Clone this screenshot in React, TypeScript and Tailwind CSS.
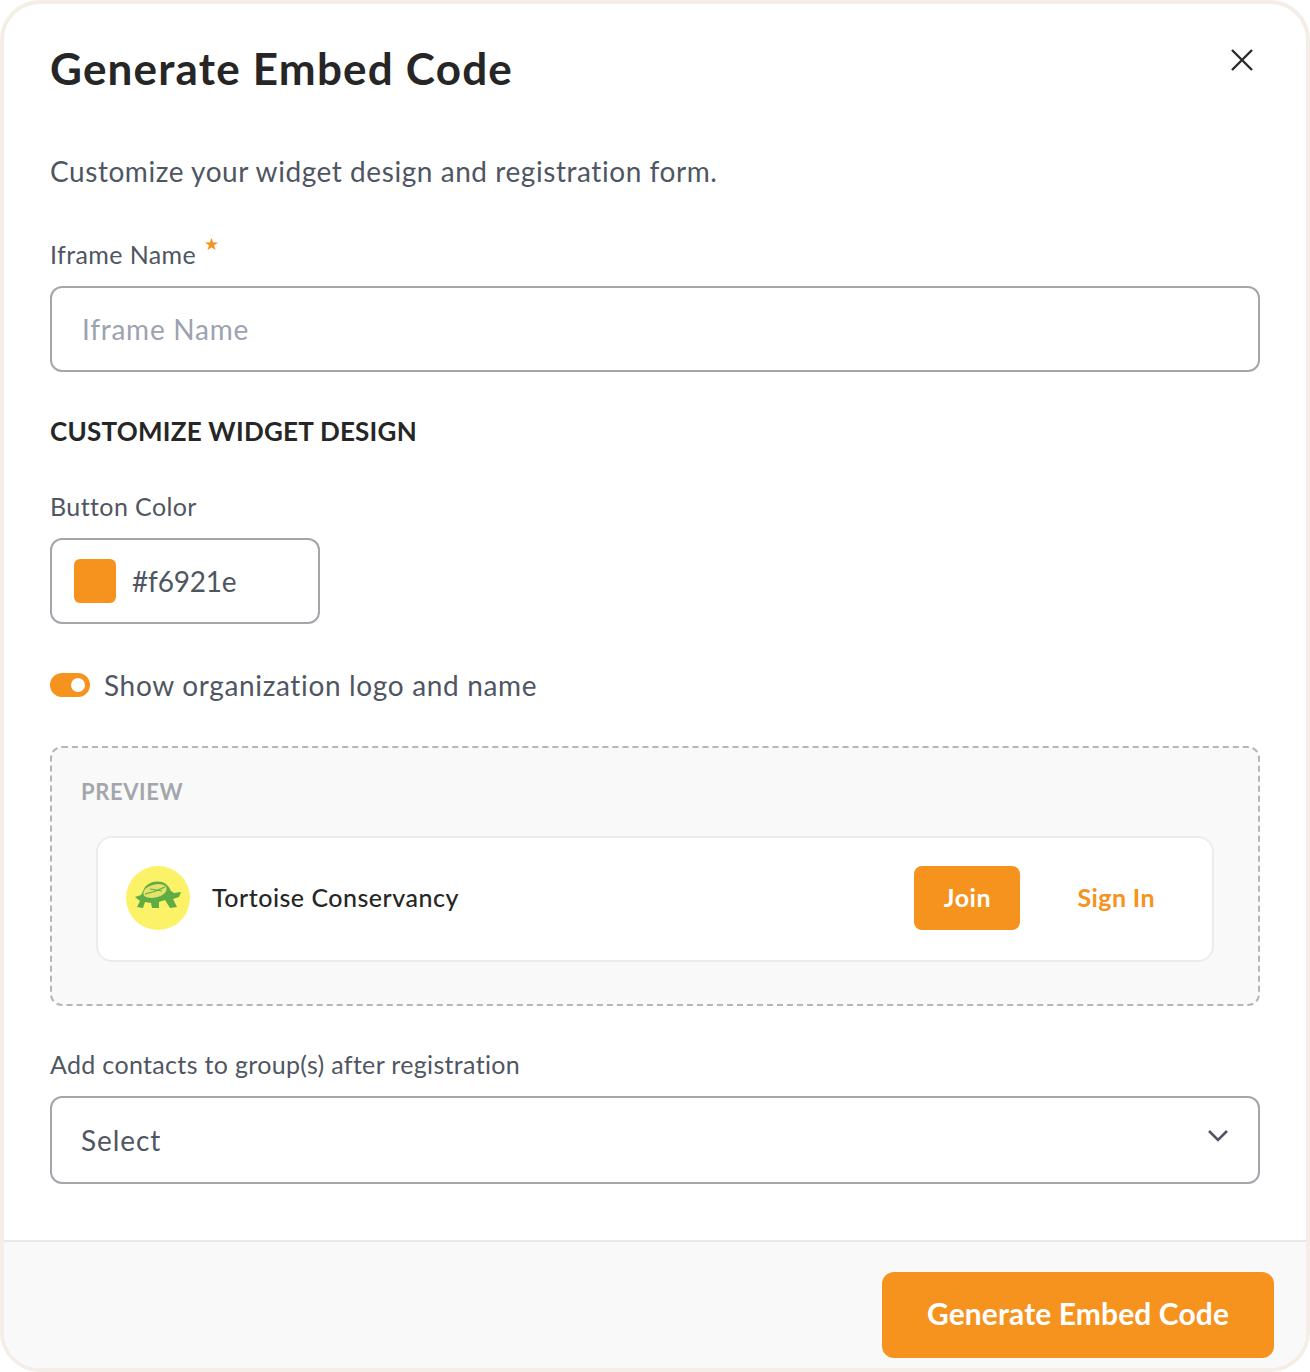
const FONT = "font-['Lato','Noto_Sans',sans-serif]";

const TurtleLogo = () => (
    <svg viewBox="0 0 64 64" className="w-16 h-16 rounded-full bg-[#fcf268]">
        <path d="M9 31 L15 29 L19 21 Q26 14 36 16 Q42 18 45 25 L48 27 L55 26 L53 31 L47 33 L51 41 L44 42 L39 34 L33 36 L33 42 L26 42 L25 37 L19 36 L17 42 L11 41 L14 35 Z" fill="#5fab44" />
        <ellipse cx="29" cy="25" rx="12" ry="6.5" transform="rotate(-14 29 25)" fill="#e3e36c" />
        <path d="M19 28 Q29 26 39 21 M24 23 L36 25" stroke="#5fab44" strokeWidth="1.2" fill="none" />
    </svg>
);

export default function App() {
    return (
        <div className={`w-[1310px] h-[1372px] bg-white border-4 border-[#f5eee7] rounded-[40px] overflow-hidden flex flex-col ${FONT}`}>
            <div className="grow pl-[46px] pr-[46px] pt-[35px] relative">
                <button type="button" className="absolute top-[42px] right-[50px] text-[#2b2b2b]" aria-label="Close">
                    <svg width="28" height="28" viewBox="0 0 28 28" fill="none" stroke="currentColor" strokeWidth="2.4">
                        <path d="M4 4 L24 24 M24 4 L4 24" />
                    </svg>
                </button>
                <h2 className="text-[44px] leading-[58px] font-bold tracking-[1.2px] text-[#262626]">Generate Embed Code</h2>
                <p className="mt-[54px] text-[28px] leading-[40px] tracking-[0.56px] text-[#4f5662]">Customize your widget design and registration form.</p>

                <label className="mt-[45px] flex text-[25px] leading-[36px] tracking-[0.4px] text-[#4f5662]">
                    Iframe Name <span className="text-[#f6921e] text-[17px] leading-[20px] ml-[8px] -mt-[2px]">★</span>
                </label>
                <div className="mt-[14px] h-[86px] border-2 border-[#a3a6ab] rounded-[12px] flex items-center px-[30px] text-[28px] tracking-[0.75px] text-[#9ca3af]">
                    Iframe Name
                </div>

                <h3 className="mt-[41px] text-[26px] leading-[36px] font-bold tracking-[0.25px] text-[#262626]">CUSTOMIZE WIDGET DESIGN</h3>

                <label className="block mt-[39px] text-[25px] leading-[36px] tracking-[0.4px] text-[#4f5662]">Button Color</label>
                <div className="mt-[14px] w-[270px] h-[86px] border-2 border-[#a3a6ab] rounded-[12px] flex items-center gap-4 pl-[22px] text-[28px] tracking-[-0.2px] text-[#4f5662]">
                    <span className="w-[42px] h-[44px] rounded-[6px] bg-[#f6921e]" />
                    #f6921e
                </div>

                <div className="mt-[39px] flex items-center gap-[14px] text-[28px] leading-[44px] tracking-[0.66px] text-[#4f5662]">
                    <span className="w-[40px] h-[24px] rounded-full bg-[#f6921e] flex items-center justify-end pr-[5px]">
                        <span className="w-[14px] h-[14px] rounded-full bg-white" />
                    </span>
                    Show organization logo and name
                </div>

                <div className="mt-[39px] h-[260px] border-2 border-dashed border-[#b4b6ba] rounded-[12px] bg-[#f9f9f9] px-[44px] pt-[29px]">
                    <div className="-ml-[15px] text-[22px] leading-[30px] font-bold tracking-[0.6px] text-[#a3a6ab]">PREVIEW</div>
                    <div className="mt-[29px] h-[126px] pb-[2px] bg-white border-2 border-[#ececec] rounded-[16px] flex items-center pl-[28px]">
                        <TurtleLogo />
                        <span className="ml-[22px] text-[25px] font-medium tracking-[0.5px] text-[#262626] -mt-[1px]">Tortoise Conservancy</span>
                        <span className="ml-auto w-[106px] h-[64px] rounded-[8px] bg-[#f6921e] text-white text-[25px] font-bold tracking-[0.6px] flex items-center justify-center">Join</span>
                        <span className="ml-[57px] mr-[57px] text-[25px] font-bold tracking-[0.4px] text-[#f6921e] -mt-[1px]">Sign In</span>
                    </div>
                </div>

                <label className="block mt-[40px] text-[25px] leading-[36px] tracking-[0.33px] text-[#4f5662]">Add contacts to group(s) after registration</label>
                <div className="mt-[14px] h-[88px] border-2 border-[#a3a6ab] rounded-[12px] flex items-center justify-between pl-[29px] pr-[27px] text-[28px] tracking-[0.9px] text-[#4f5662]">
                    Select
                    <svg width="26" height="26" viewBox="0 0 26 26" fill="none" stroke="#4f5662" strokeWidth="2.6" className="-mt-2">
                        <path d="M4 8 L13 17 L22 8" />
                    </svg>
                </div>
            </div>
            <div className="h-[128px] shrink-0 border-t-2 border-[#e8e8ea] bg-[#f9f9f9] flex justify-end items-start pt-[30px] pr-[32px]">
                <button type="button" className="w-[392px] h-[86px] pb-[4px] rounded-[12px] bg-[#f6921e] text-white text-[30px] font-bold tracking-[0.1px]">Generate Embed Code</button>
            </div>
        </div>
    );
}
